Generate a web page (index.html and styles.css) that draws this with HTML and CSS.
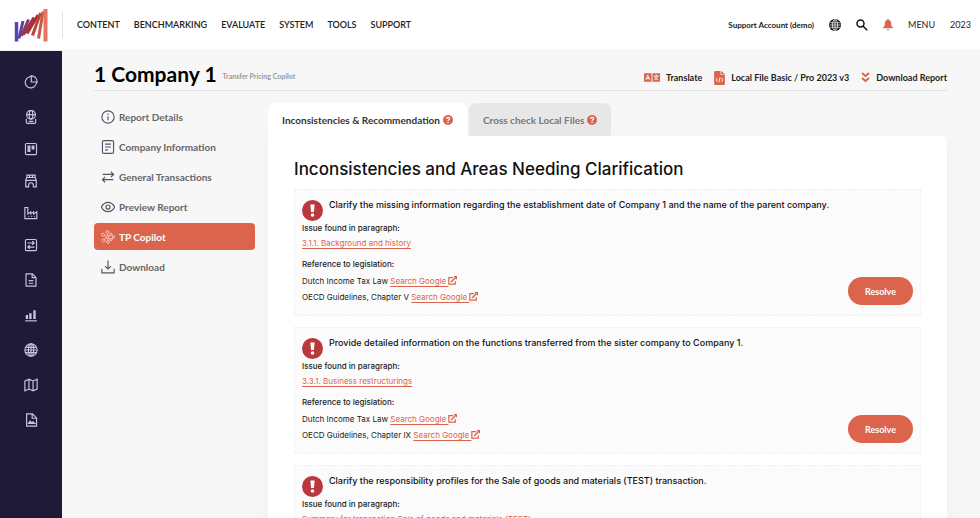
FILE: index.html
```
<!DOCTYPE html>
<html lang="en">
  <head>
    <meta charset="utf-8" />
    <title>1 Company 1 - Transfer Pricing Copilot</title>
    <link rel="stylesheet" href="styles.css">
  </head>

  <body>
    <svg class="defs" aria-hidden="true">
      <symbol id="globe" viewBox="0 0 24 24">
        <circle cx="12" cy="12" r="10.500" />
        <ellipse cx="12" cy="12" rx="4.500" ry="10.500" />
        <path d="M12 2v20M2 12h20M3.500 7.500h17M3.500 16.500h17" />
      </symbol>
      <symbol id="help" viewBox="0 0 16 16">
        <circle cx="8" cy="8" r="8" fill="#dc644c" />
        <path d="M5.600 6.200c.2-3.200 5-3 4.900-.2 0 1.700-2.400 1.700-2.400 3.400" fill="none" stroke="#fff" stroke-width="1.900" />
        <circle cx="8" cy="12" r="1.200" fill="#fff" />
      </symbol>
      <symbol id="alert" viewBox="0 0 20 20">
        <circle cx="10" cy="10" r="10" fill="#b8383d" />
        <path d="M8 4.300h4l-.6 7.200H8.600z" fill="#fff" />
        <circle cx="10" cy="14.300" r="1.700" fill="#fff" />
      </symbol>
      <symbol id="external" viewBox="0 0 16 16">
        <path d="M9 3H1.500v11.500H13V9.500" fill="none" stroke="#dc644c" stroke-width="2.200" />
        <path d="M5.500 10.500L13 3" fill="none" stroke="#dc644c" stroke-width="2.600" />
        <path d="M9.500 0H16v6.500z" fill="#dc644c" />
      </symbol>
    </svg>

    <header class="header">
      <a class="logo" href="#" aria-label="Home">
        <svg viewBox="0 0 34 34" width="34" height="34">
          <g fill="none" stroke-width="3">
            <path d="M2.500 14v19.500" stroke="#5146b8" stroke-width="3.500" />
            <path d="M9 13L5 30.500" stroke="#62409b" />
            <path d="M14.500 11.500L7.500 28" stroke="#853a70" />
            <path d="M20 9.500L9.500 26.500" stroke="#9c3347" />
            <path d="M24 7L13 25.500" stroke="#a72f34" />
            <path d="M26.500 5L18.500 27.500" stroke="#bd443b" />
            <path d="M29 3.500L24.500 30.500" stroke="#cc5746" />
            <path d="M31.500 1v32.500" stroke="#e37762" stroke-width="4" />
          </g>
        </svg>
      </a>
      <nav class="topnav">
        <a href="#">CONTENT</a>
        <a href="#">BENCHMARKING</a>
        <a href="#">EVALUATE</a>
        <a href="#">SYSTEM</a>
        <a href="#">TOOLS</a>
        <a href="#">SUPPORT</a>
      </nav>
      <div class="account">
        <a class="user" href="#">Support Account (demo)</a>
        <button aria-label="Language">
          <svg viewBox="0 0 24 24" width="12" height="12" fill="none" stroke="#fff" stroke-width="1.500">
            <circle cx="12" cy="12" r="12" fill="#111" stroke="none" />
            <ellipse cx="12" cy="12" rx="5" ry="10.500" /><path d="M12 1v22M1 12h22M2.500 7.500h19M2.500 16.500h19" />
          </svg>
        </button>
        <button aria-label="Search">
          <svg viewBox="0 0 24 24" width="12" height="12" fill="none" stroke="#111" stroke-width="3">
            <circle cx="9" cy="9" r="7" /><path d="M14 14l8.500 8.500" />
          </svg>
        </button>
        <button aria-label="Notifications">
          <svg viewBox="0 0 18 20" width="10" height="11" fill="#dc644c">
            <path d="M9 0a1.500 1.500 0 0 0-1.500 1.800C4.500 2.500 3.200 5 3.200 8c0 4-1 5.500-3 7.200V17h17.600v-1.800c-2-1.700-3-3.200-3-7.200 0-3-1.300-5.500-4.300-6.200A1.500 1.500 0 0 0 9 0zM6.500 18a2.500 2 0 0 0 5 0z" />
          </svg>
        </button>
        <a class="year" href="#">MENU</a>
        <a class="year" href="#">2023</a>
      </div>
    </header>

    <div class="layout">
      <nav class="sidebar">
        <div class="group">
          <a class="first" href="#" aria-label="Dashboard">
            <svg viewBox="0 0 24 24"><path d="M9 3.500a9.500 9.500 0 1 0 11.500 12.500" /><path d="M12.500 1.500v10.500h10A10 10 0 0 0 12.500 1.500zM9 3.500L12.500 1.500M20.500 16l2-4" /></svg>
          </a>
          <a href="#" aria-label="Countries">
            <svg viewBox="0 0 24 24"><circle cx="12" cy="8" r="7.500" /><ellipse cx="12" cy="8" rx="3" ry="7.500" /><path d="M4.500 8h15M4 15v6q0 2 2 2h12q2 0 2-2v-6M8 19.500h8" /></svg>
          </a>
          <a href="#" aria-label="Board">
            <svg viewBox="0 0 24 24"><rect x="2.500" y="2.500" width="19" height="19" rx="2" /><path d="M7 7h3v9H7zM14 7h3v5h-3z" fill="#c9c6d9" /></svg>
          </a>
          <a href="#" aria-label="Entities">
            <svg viewBox="0 0 24 24"><path d="M5 2v4L3 10v12h5v-3a4 4 0 0 1 8 0v3h5V10l-2-4V2zM5 6h14M3 11h18M9.500 2v4M14.500 2v4" /></svg>
          </a>
          <a href="#" aria-label="Industry">
            <svg viewBox="0 0 24 24"><path d="M1.500 2.500h5v11l5-3.500v3.500l5-3.500v3.500l5.500-3.500v11.500H1.500zM7 17.500h2M12 17.500h2M17 17.500h2" /></svg>
          </a>
          <a href="#" aria-label="Transactions">
            <svg viewBox="0 0 24 24"><rect x="2.500" y="2.500" width="19" height="19" rx="2" /><path d="M6 8.500h11M14 5.500l3.500 3-3.500 3M18 15.500H7M10 12.500l-3.500 3 3.500 3" /></svg>
          </a>
        </div>
        <div class="group wide">
          <a href="#" aria-label="Documents">
            <svg viewBox="0 0 24 24"><path d="M3.500 1.500h11l6 6v15h-17zM14 2v6h6M8 13h8M8 17.500h8" /></svg>
          </a>
          <a href="#" aria-label="Statistics">
            <svg viewBox="0 0 24 24"><path d="M2 22h20" /><path d="M4 13h2v5H4zM10 10h2v8h-2zM17 5h2v13h-2z" fill="#c9c6d9" /></svg>
          </a>
          <a href="#" aria-label="Regions"><svg><use href="#globe" /></svg></a>
          <a href="#" aria-label="Map">
            <svg viewBox="0 0 24 24"><path d="M1.500 5L8.500 2l7 3 7-3v17l-7 3-7-3-7 3zM8.500 2v17M15.500 5v17" /></svg>
          </a>
          <a href="#" aria-label="Templates">
            <svg viewBox="0 0 24 24"><path d="M4.500 1.500h10l7 7v14h-17zM14 2v7h7" /><path d="M7.500 18l3-4 3 3 2-2 3 3z" fill="#c9c6d9" /></svg>
          </a>
        </div>
      </nav>

      <main class="main">
        <div class="titlebar">
          <h1>1 Company 1</h1>
          <span class="subtitle">Transfer Pricing Copilot</span>
          <div class="actions">
            <a href="#">
              <svg viewBox="0 0 34 18" width="16" height="9">
                <path d="M0 0h16v18H0zM18 0h16v18H18z" fill="#dc644c" />
                <path d="M4 14L8 4l4 10M5.500 11h5M21 6h10M26 3v3M29 7q-2 5-7 7M23 8q2 4 7 6" fill="none" stroke="#fff" stroke-width="2" />
              </svg>
              Translate
            </a>
            <a href="#">
              <svg viewBox="0 0 20 26" width="11" height="14">
                <path d="M0 2q0-2 2-2h10v7h8v17q0 2-2 2H2q-2 0-2-2zM13.500 0L20 6h-6.500z" fill="#dc644c" />
                <path d="M6.500 13l-3 3.500 3 3.500M13.500 13l3 3.500-3 3.500M11 12l-2 9" fill="none" stroke="#fff" stroke-width="1.600" />
              </svg>
              Local File Basic / Pro 2023 v3
            </a>
            <a href="#">
              <svg viewBox="0 0 18 22" width="9" height="11" fill="none" stroke="#dc644c" stroke-width="4">
                <path d="M2 2l7 6 7-6M2 12l7 6 7-6" />
              </svg>
              Download Report
            </a>
          </div>
        </div>

        <div class="columns">
          <nav class="menu">
            <a href="#">
              <svg viewBox="0 0 24 24"><circle cx="12" cy="12" r="10.500" /><path d="M12 10.500v7M12 6v2" /></svg>
              Report Details
            </a>
            <a href="#">
              <svg viewBox="0 0 24 24"><rect x="2.500" y="1" width="19" height="22" rx="2" /><path d="M7 7h10M7 12h10M7 17h5" /></svg>
              Company Information
            </a>
            <a href="#">
              <svg viewBox="0 0 24 24"><path d="M3 7.500h18M17 3l4.500 4.500L17 12M21 16.500H3M7 12l-4.500 4.500L7 21" /></svg>
              General Transactions
            </a>
            <a href="#">
              <svg viewBox="0 0 24 24"><path d="M.5 12Q5 4 12 4t11.500 8Q19 20 12 20T.5 12z" /><circle cx="12" cy="12" r="3.500" /></svg>
              Preview Report
            </a>
            <a class="active" href="#">
              <svg class="thin" viewBox="0 0 24 24">
                <circle cx="11" cy="12" r="2.500" /><circle cx="11" cy="3.500" r="2.500" /><circle cx="3.500" cy="8" r="2.500" /><circle cx="4.500" cy="18" r="2.500" /><circle cx="12" cy="20.500" r="2.500" /><circle cx="17" cy="7.500" r="2" /><circle cx="17" cy="16.500" r="2" /><circle cx="21.500" cy="12" r="2" />
                <path d="M11 6v3.500M5.500 9l3.500 2M6 16l3-2.500M12 18l-.5-3.500M15.500 9l-2.500 1.500M15.500 15.500L13 13.500M18.500 9l2 1.500M18.500 15l2-1.500" />
              </svg>
              TP Copilot
            </a>
            <a href="#">
              <svg viewBox="0 0 24 24"><path d="M12 1v14M7 10.500l5 5 5-5M1.500 15v7h21v-7" /></svg>
              Download
            </a>
          </nav>

          <section class="content">
            <div class="tabs" role="tablist">
              <button class="tab selected" role="tab" aria-selected="true">Inconsistencies &amp; Recommendation <svg width="10" height="10"><use href="#help" /></svg></button>
              <button class="tab" role="tab" aria-selected="false">Cross check Local Files <svg width="10" height="10"><use href="#help" /></svg></button>
            </div>
            <div class="panel">
              <h2>Inconsistencies and Areas Needing Clarification</h2>

              <article class="issue">
                <div class="issue-title">
                  <svg width="21" height="21"><use href="#alert" /></svg>
                  <h3>Clarify the missing information regarding the establishment date of Company 1 and the name of the parent company.</h3>
                </div>
                <h4>Issue found in paragraph:</h4>
                <p><a href="#">3.1.1. Background and history</a></p>
                <h4 class="reference">Reference to legislation:</h4>
                <div class="issue-foot">
                  <div>
                    <p>Dutch Income Tax Law <a href="#">Search Google <svg width="9" height="9"><use href="#external" /></svg></a></p>
                    <p>OECD Guidelines, Chapter V <a href="#">Search Google <svg width="9" height="9"><use href="#external" /></svg></a></p>
                  </div>
                  <button class="resolve">Resolve</button>
                </div>
              </article>

              <article class="issue">
                <div class="issue-title">
                  <svg width="21" height="21"><use href="#alert" /></svg>
                  <h3>Provide detailed information on the functions transferred from the sister company to Company 1.</h3>
                </div>
                <h4>Issue found in paragraph:</h4>
                <p><a href="#">3.3.1. Business restructurings</a></p>
                <h4 class="reference">Reference to legislation:</h4>
                <div class="issue-foot">
                  <div>
                    <p>Dutch Income Tax Law <a href="#">Search Google <svg width="9" height="9"><use href="#external" /></svg></a></p>
                    <p>OECD Guidelines, Chapter IX <a href="#">Search Google <svg width="9" height="9"><use href="#external" /></svg></a></p>
                  </div>
                  <button class="resolve">Resolve</button>
                </div>
              </article>

              <article class="issue">
                <div class="issue-title">
                  <svg width="21" height="21"><use href="#alert" /></svg>
                  <h3>Clarify the responsibility profiles for the Sale of goods and materials (TEST) transaction.</h3>
                </div>
                <h4>Issue found in paragraph:</h4>
                <p><a href="#">Summary for transaction Sale of goods and materials (TEST)</a></p>
              </article>
            </div>
          </section>
        </div>
      </main>
    </div>
  </body>
</html>
```
FILE: styles.css
```
* {
  margin: 0;
  padding: 0;
  box-sizing: border-box;
}

body {
  height: 100vh;
  overflow: hidden;
  display: flex;
  flex-direction: column;
  background-color: #f7f7f7;
  color: #222;
  font-family: Lato, sans-serif;
  font-size: 10px;
}

a {
  color: inherit;
  text-decoration: none;
}

button {
  border: 0;
  background: none;
  font: inherit;
  color: inherit;
  cursor: pointer;
}

svg {
  flex: none;
}

.defs {
  display: none;
}

/* top bar */
.header {
  flex: none;
  height: 51px;
  padding: 0 9px 1px 0;
  display: flex;
  align-items: center;
  background-color: #fff;
  border-bottom: 1px solid #efefef;
}

.logo {
  width: 63px;
  height: 26px;
  padding-left: 14px;
  display: flex;
  align-items: center;
  border-right: 1px solid #dfe3ec;
}

.topnav {
  display: flex;
  gap: 14px;
  padding-left: 14px;
  font-size: 9px;
  font-weight: 600;
}

.account {
  margin-left: auto;
  display: flex;
  align-items: center;
  gap: 15px;
}

.account button {
  display: flex;
}

.user {
  font-size: 8px;
  font-weight: bold;
}

.year {
  font-size: 9px;
}

/* icon rail */
.layout {
  flex: 1;
  min-height: 0;
  display: flex;
}

.sidebar {
  flex: none;
  width: 62px;
  padding-top: 11px;
  background-color: #1e1a37;
}

.group a {
  height: 32px;
  display: flex;
  align-items: center;
  justify-content: center;
}

.group .first {
  height: 39px;
}

.group.wide {
  padding-top: 1px;
}

.group.wide a {
  height: 35px;
}

.group svg {
  width: 14px;
  height: 14px;
  fill: none;
  stroke: #c9c6d9;
  stroke-width: 2;
}

/* page */
.main {
  flex: 1;
  min-width: 0;
  padding: 8px 33px 0 32px;
}

.titlebar {
  height: 32px;
  padding-bottom: 2px;
  display: flex;
  align-items: center;
  border-bottom: 1px solid #e2e2e2;
}

h1 {
  color: #000;
  font-size: 21px;
  font-weight: bold;
}

.subtitle {
  padding: 5px 0 0 6px;
  color: #999;
  font-size: 7px;
  font-weight: bold;
}

.actions {
  margin-left: auto;
  padding-top: 8px;
  display: flex;
  gap: 12px;
  font-size: 9px;
  font-weight: bold;
}

.actions a {
  display: flex;
  align-items: center;
  gap: 6px;
}

.columns {
  display: flex;
  gap: 13px;
  padding-top: 12px;
}

.menu {
  flex: none;
  width: 161px;
  display: flex;
  flex-direction: column;
  gap: 3px;
}

.menu a {
  height: 27px;
  padding-left: 7px;
  display: flex;
  align-items: center;
  gap: 4px;
  border-radius: 4px;
  color: #666;
  font-weight: bold;
}

.menu svg {
  width: 14px;
  height: 14px;
  fill: none;
  stroke: #55556a;
  stroke-width: 2;
}

.menu .active {
  background-color: #dc644c;
  color: #fff;
}

.menu .thin {
  stroke: #fff;
  stroke-width: 1;
}

.content {
  flex: 1;
  min-width: 0;
}

.tabs {
  display: flex;
  gap: 2px;
}

.tab {
  height: 33px;
  padding: 0 14px;
  display: flex;
  align-items: center;
  gap: 3px;
  border-radius: 7px 7px 0 0;
  background-color: #e7e7e7;
  color: #777;
  font-size: 10px;
  font-weight: bold;
}

.tab.selected {
  background-color: #fff;
  color: #333;
}

.panel {
  min-height: 400px;
  padding: 20px 26px;
  background-color: #fff;
  border-radius: 0 5px 0 0;
  box-shadow: 0 4px 20px rgba(0, 0, 0, 0.04);
  font-family: Inter, sans-serif;
}

h2 {
  margin-bottom: 7px;
  color: #111;
  font-size: 17px;
  font-weight: 500;
  line-height: 26px;
}

.issue {
  height: 127px;
  margin-bottom: 11px;
  padding: 7px;
  border: 1px dashed #f1f1f1;
  background-color: #fbfbfb;
  font-size: 8px;
}

.issue-title {
  display: flex;
  gap: 6px;
}

.issue-title svg {
  margin-top: 3px;
}

h3 {
  color: #111;
  font-size: 9px;
  font-weight: 500;
  line-height: 15px;
}

h4 {
  font-size: 8px;
  font-weight: 500;
  line-height: 14px;
}

.issue p {
  line-height: 16px;
}

.issue p a {
  color: #dc644c;
  text-decoration: underline;
  text-underline-offset: 2px;
}

.issue p svg {
  vertical-align: -1px;
}

.reference {
  margin: 6px 0 2px;
}

.issue-foot {
  display: flex;
  align-items: flex-end;
  justify-content: space-between;
}

.resolve {
  flex: none;
  width: 65px;
  height: 28px;
  border-radius: 14px;
  background-color: #dc644c;
  color: #fff;
  font-family: Lato, sans-serif;
  font-size: 9px;
  font-weight: bold;
}
```
